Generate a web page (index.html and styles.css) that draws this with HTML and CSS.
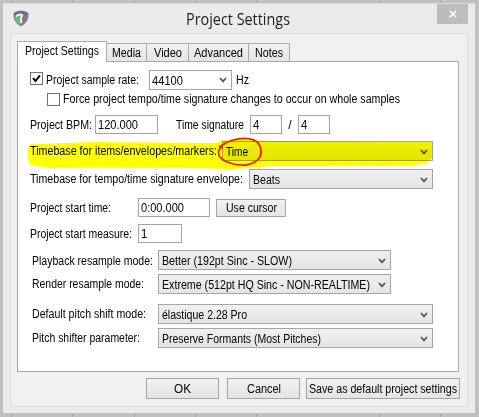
FILE: index.html
```html
<!DOCTYPE html>
<html lang="en">
<head>
<meta charset="utf-8">
<title>Project Settings</title>
<link rel="stylesheet" href="styles.css">
</head>
<body>
<main class="dialog">
  <header class="titlebar">
    <svg class="logo" viewBox="0 0 16 17">
      <path d="M1 3 Q8 -1 15 3 Q16 12 8 16 Q0 12 1 3Z" fill="#8b7585"/>
      <path d="M1 3 Q8 -1 15 3 L14 5 Q8 2 1 6Z" fill="#566b9c"/>
      <path d="M1 7 L6 6 L8 15 Q1 12 1 7Z" fill="#62c566"/>
      <path d="M3 6.2 Q6.5 3.4 9 5 Q7.4 8 8.4 13" fill="none" stroke="#f8fafa" stroke-width="2"/>
      <path d="M1 3 Q8 -1 15 3 Q16 12 8 16 Q0 12 1 3Z" fill="none" stroke="#75808c" stroke-width=".7"/>
    </svg>
    <h1><span class="t" data-w="104">Project Settings</span></h1>
    <div class="close"><svg viewBox="0 0 8 8"><path d="M.8.8 7.2 7.2M7.2.8.8 7.2"/></svg></div>
  </header>
  <section class="client">
    <nav class="tabs">
      <div class="tab active"><span class="t" data-w="74">Project Settings</span></div>
      <div class="tab media"><span class="t" data-w="29">Media</span></div>
      <div class="tab video"><span class="t" data-w="28">Video</span></div>
      <div class="tab advanced"><span class="t" data-w="49">Advanced</span></div>
      <div class="tab notes"><span class="t" data-w="28">Notes</span></div>
    </nav>
    <div class="panel">
      <div class="row rate">
        <div class="check"><svg viewBox="0 0 11 11"><path d="M2 5.2 4.5 8 9 2.3"/></svg></div>
        <label class="w-rate"><span class="t" data-w="93">Project sample rate:</span></label>
        <div class="combo edit c-rate"><span class="t" data-w="31">44100</span><svg class="arrow" viewBox="0 0 8 6"><path d="M1 1 4 4.4 7 1"/></svg></div>
        <span class="t hz" data-w="13">Hz</span>
      </div>
      <div class="row force">
        <div class="check"></div>
        <label><span class="t" data-w="337">Force project tempo/time signature changes to occur on whole samples</span></label>
      </div>
      <div class="row bpm">
        <label class="w-bpm"><span class="t" data-w="62">Project BPM:</span></label>
        <div class="input i-bpm"><span class="t" data-w="40">120.000</span></div>
        <label class="w-sig"><span class="t" data-w="68">Time signature</span></label>
        <div class="input i-sig"><span class="t" data-w="6.3">4</span></div>
        <span class="slash">/</span>
        <div class="input i-sig"><span class="t" data-w="6.3">4</span></div>
      </div>
      <div class="row items">
        <label class="w-items"><span class="t" data-w="187">Timebase for items/envelopes/markers:</span></label>
        <div class="combo grow"><span class="t" data-w="22">Time</span><svg class="arrow" viewBox="0 0 8 6"><path d="M1 1 4 4.4 7 1"/></svg></div>
        <svg class="marker" viewBox="27 137 408 33">
          <path d="M27.5 146 Q29 143.5 36 144 L95 142 L215 143 L224 140 L232 139 L270 141 L390 142 L432 142 L432 158 L430 159 L427 163 Q405 167 370 165 L320 166 L270 166 L232 169 L195 168 L100 167 L50 168 L31 165 Q28 163 28 155Z"/>
        </svg>
        <svg class="circle" viewBox="215 136 50 32"><path d="M219 147 C222 145 226 142 233 140 C244 137 257 138 260 146 C264 158 256 163 246 165 C236 166 224 162 220 157 C216 151 220 149 221 147 L223 148"/></svg>
      </div>
      <div class="row tempo">
        <label class="w-tempo"><span class="t" data-w="213">Timebase for tempo/time signature envelope:</span></label>
        <div class="combo grow"><span class="t" data-w="27">Beats</span><svg class="arrow" viewBox="0 0 8 6"><path d="M1 1 4 4.4 7 1"/></svg></div>
      </div>
      <div class="row start">
        <label class="w-start"><span class="t" data-w="81">Project start time:</span></label>
        <div class="input i-start"><span class="t" data-w="43">0:00.000</span></div>
        <div class="button b-cursor"><span class="t" data-w="51">Use cursor</span></div>
      </div>
      <div class="row measure">
        <label class="w-start"><span class="t" data-w="102">Project start measure:</span></label>
        <div class="input i-measure"><span class="t" data-w="6.3">1</span></div>
      </div>
      <div class="row mode playback">
        <label class="w-mode"><span class="t" data-w="121">Playback resample mode:</span></label>
        <div class="combo c-mode"><span class="t" data-w="130">Better (192pt Sinc - SLOW)</span><svg class="arrow" viewBox="0 0 8 6"><path d="M1 1 4 4.4 7 1"/></svg></div>
      </div>
      <div class="row mode render">
        <label class="w-mode"><span class="t" data-w="112">Render resample mode:</span></label>
        <div class="combo c-mode"><span class="t" data-w="208">Extreme (512pt HQ Sinc - NON-REALTIME)</span><svg class="arrow" viewBox="0 0 8 6"><path d="M1 1 4 4.4 7 1"/></svg></div>
      </div>
      <div class="row mode pitch">
        <label class="w-mode"><span class="t" data-w="114">Default pitch shift mode:</span></label>
        <div class="combo grow"><span class="t" data-w="85">élastique 2.28 Pro</span><svg class="arrow" viewBox="0 0 8 6"><path d="M1 1 4 4.4 7 1"/></svg></div>
      </div>
      <div class="row mode shifter">
        <label class="w-mode"><span class="t" data-w="108">Pitch shifter parameter:</span></label>
        <div class="combo grow"><span class="t" data-w="159">Preserve Formants (Most Pitches)</span><svg class="arrow" viewBox="0 0 8 6"><path d="M1 1 4 4.4 7 1"/></svg></div>
      </div>
    </div>
    <footer class="actions">
      <div class="button b-ok"><span class="t" data-w="17">OK</span></div>
      <div class="button b-cancel"><span class="t" data-w="34">Cancel</span></div>
      <div class="button b-save"><span class="t" data-w="148">Save as default project settings</span></div>
    </footer>
  </section>
</main>
<script src="script.js"></script>
</body>
</html>
```
FILE: script.js
```js
// Condense each text run to its column width.
document.querySelectorAll('.t[data-w]').forEach(function (el) {
  var range = document.createRange();
  range.selectNodeContents(el);
  var natural = range.getBoundingClientRect().width;
  var target = parseFloat(el.dataset.w);
  el.style.width = target + 'px';
  el.style.transform = 'scaleX(' + target / natural + ')';
});
```
FILE: styles.css
```css
* { box-sizing: border-box; }
body {
  margin: 0;
  width: 479px;
  height: 417px;
  overflow: hidden;
  padding: 3px 4px 4px 3px;
  background: repeating-linear-gradient(90deg, #c0c0c0 0 11px, #aaa 11px 12px, #c0c0c0 12px 61.3px);
  font: 12px/14px "Liberation Sans", Arial, sans-serif;
  color: #000;
}
.dialog {
  width: 472px;
  height: 410px;
  padding: 0 7px 6px;
  background: #ebebeb;
  border-top: 1px solid #ddd;
}
.titlebar { display: flex; height: 29px; position: relative; }
.logo { width: 16px; height: 17px; margin: 6px 0 0 3px; }
h1 {
  flex: 1;
  margin: 5px 0 0 157px;
  font: 15.5px/20px "Open Sans", sans-serif;
  color: #222;
}
.close {
  width: 31px;
  height: 20px;
  background: #bcbcbc;
  display: flex;
  align-items: center;
  justify-content: center;
}
.close svg { width: 8px; height: 8px; fill: none; stroke: #fff; stroke-width: 1.5; }
.client {
  height: 374px;
  padding: 7px 7px 0 6px;
  border: 1px solid #dcdcdc;
  background: #f0f0f0;
}
.tabs { display: flex; align-items: flex-end; height: 20px; position: relative; }
.tab {
  height: 18px;
  border: 1px solid #aaa;
  border-left: 0;
  border-bottom: 0;
  background: linear-gradient(#f1f1f1, #e5e5e5);
  display: flex;
  align-items: center;
  justify-content: center;
}
.tab.active {
  width: 90px;
  height: 21px;
  margin-bottom: -1px;
  padding-bottom: 2px;
  border-left: 1px solid #aaa;
  background: #fff;
}
.media { width: 40px; }
.video { width: 42px; }
.advanced { width: 60px; }
.notes { width: 41px; }
.panel {
  height: 311px;
  width: 442px;
  padding: 8px 25px 0 12px;
  border: 1px solid #a8a8a8;
  background: #fff;
}
.t { display: block; flex-shrink: 0; white-space: nowrap; transform-origin: 0 50%; }
.row { display: flex; align-items: center; height: 20px; position: relative; }
.row > * { flex-shrink: 0; }
.rate label, .force label, .items label, .tempo label { padding-bottom: 1px; }
.rate .check { margin-bottom: 3px; }
.playback label { padding-top: 2px; }
.force { height: 14px; margin-top: 2px; padding-left: 17px; }
.force label { width: 337px; }
.bpm { margin-top: 9px; height: 19px; }
.items { margin-top: 7px; }
.tempo { margin-top: 8px; }
.start { margin-top: 9px; height: 19px; }
.measure { margin-top: 7px; height: 19px; }
.mode { padding-left: 2px; margin-top: 4px; }
.playback { margin-top: 7px; }
.pitch { margin-top: 10px; }
.check {
  width: 13px;
  height: 13px;
  margin-right: 3px;
  border: 1px solid #707070;
  background: #fff;
}
.check svg { display: block; width: 11px; height: 11px; fill: none; stroke: #000; stroke-width: 2; }
.w-rate { width: 103px; }
.w-bpm { width: 65px; }
.w-sig { width: 74px; }
.w-items { width: 192px; }
.w-tempo { width: 219px; }
.w-start { width: 108px; }
.w-mode { width: 126px; }
.input, .combo, .button {
  height: 20px;
  border: 1px solid #a5a5a5;
  display: flex;
  align-items: center;
}
.input { height: 19px; background: #fff; padding-left: 2px; }
.combo {
  justify-content: space-between;
  padding: 2px 4px 0 3px;
  background: linear-gradient(#f0f0f0, #e5e5e5);
}
.edit { background: #fff; padding: 1px 4px 0 2px; }
.arrow { width: 8px; height: 6px; margin-bottom: 1px; fill: none; stroke: #555; stroke-width: 1.8; }
.row .grow { flex: 1; }
.c-rate { width: 83px; }
.hz { margin-left: 4px; }
.i-bpm { width: 63px; margin-right: 18px; }
.i-sig { width: 32px; }
.slash { width: 16px; text-align: center; }
.i-start { width: 72px; }
.i-measure { width: 44px; }
.c-mode { width: 233px; }
.button { justify-content: center; background: linear-gradient(#f1f1f1, #e4e4e4); }
.b-cursor { width: 70px; height: 18px; margin-left: 6px; }
.actions { display: flex; margin: 6px 0 0 129px; }
.actions .button { height: 21px; }
.b-ok { width: 73px; }
.b-cancel { width: 73px; margin-left: 8px; }
.b-save { width: 154px; margin-left: 6px; }
.marker { position: absolute; left: -3px; top: -4px; width: 408px; height: 33px; fill: #ff0; mix-blend-mode: multiply; }
.circle { position: absolute; left: 185px; top: -5px; width: 50px; height: 32px; fill: none; stroke: #ee1c12; stroke-width: 1.8; }
```
